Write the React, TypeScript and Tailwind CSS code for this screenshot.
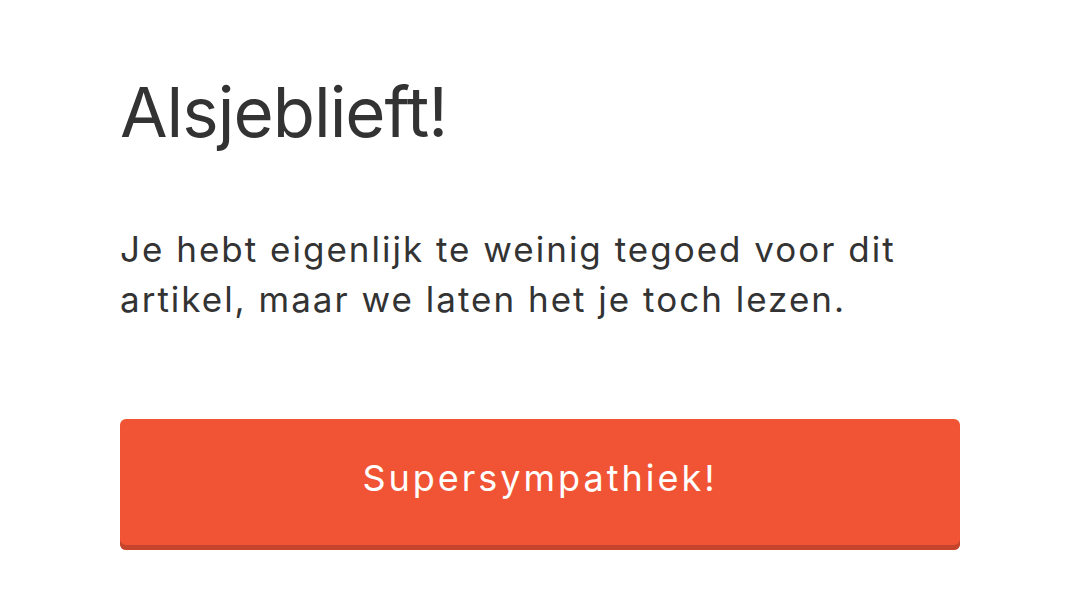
export default function App() {
  return (
    <div className="min-h-screen w-full bg-white px-[120px] pt-[64px] font-['Inter','Lato',sans-serif] text-[#333333]">
      <h1 className="text-[69px] leading-[96px] font-normal tracking-[-1px]">Alsjeblieft!</h1>

      <p className="mt-[64px] text-[35px] leading-[50px] tracking-[2px]">
        Je hebt eigenlijk te weinig tegoed voor dit artikel, maar we laten het je toch lezen.
      </p>

      <button
        type="button"
        className="mt-[95px] flex h-[131px] w-full items-center justify-center rounded-[6px] bg-[#f15434] pb-[13px] text-[36px] leading-[40px] tracking-[3px] text-white shadow-[inset_0_-5px_0_#c4452c]"
      >
        Supersympathiek!
      </button>
    </div>
  );
}
